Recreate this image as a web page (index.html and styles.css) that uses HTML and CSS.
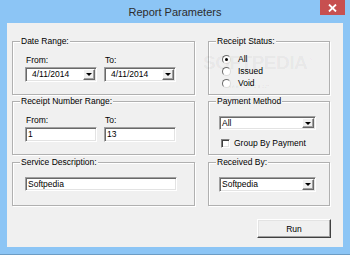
FILE: index.html
```html
<!DOCTYPE html>
<html>
<head>
<meta charset="utf-8">
<link rel="stylesheet" href="styles.css">
</head>
<body>
<div class="window">
  <div class="titlebar">
    <span class="title">Report Parameters</span>
    <div class="close"><svg width="9" height="8" viewBox="0 0 9 8"><path d="M1 0.5 L8 7.5 M8 0.5 L1 7.5" stroke="#fff" stroke-width="1.8"/></svg></div>
  </div>
  <div class="client">
    <div class="grid">
      <div class="group g-tall">
        <span class="gtitle">Date Range:</span>
        <div class="pair">
          <span class="lbl">From:</span>
          <span class="lbl">To:</span>
          <div class="combo date"><span class="ctext">4/11/2014</span><span class="cbtn"><i></i></span></div>
          <div class="combo date"><span class="ctext">4/11/2014</span><span class="cbtn"><i></i></span></div>
        </div>
      </div>
      <div class="group g-tall status">
        <span class="gtitle">Receipt Status:</span>
        <div class="radio-row"><span class="radio checked"></span><span>All</span></div>
        <div class="radio-row"><span class="radio"></span><span>Issued</span></div>
        <div class="radio-row"><span class="radio"></span><span>Void</span></div>
      </div>
      <div class="group g-tall">
        <span class="gtitle">Receipt Number Range:</span>
        <div class="pair">
          <span class="lbl">From:</span>
          <span class="lbl">To:</span>
          <div class="textbox">1</div>
          <div class="textbox">13</div>
        </div>
      </div>
      <div class="group g-tall right-pad">
        <span class="gtitle">Payment Method</span>
        <div class="combo wide"><span class="ctext">All</span><span class="cbtn"><i></i></span></div>
        <div class="check-row"><span class="check"></span><span>Group By Payment</span></div>
      </div>
      <div class="group g-short">
        <span class="gtitle">Service Description:</span>
        <div class="textbox long">Softpedia</div>
      </div>
      <div class="group g-short right-pad">
        <span class="gtitle">Received By:</span>
        <div class="combo wide tall"><span class="ctext">Softpedia</span><span class="cbtn"><i></i></span></div>
      </div>
    </div>
    <div class="actions"><button class="btn">Run</button></div>
    <div class="watermark">SOFTPEDIA<sup>™</sup></div>
    <div class="watermark-url">www.softpedia.com</div>
  </div>
</div>
</body>
</html>
```
FILE: styles.css
```css
* { box-sizing: border-box; }
html, body { margin: 0; padding: 0; }
body {
  width: 350px;
  height: 255px;
  overflow: hidden;
  background: #8cc5f5;
  font-family: "Liberation Sans", Arial, sans-serif;
  font-size: 8.5px;
  color: #000;
}
.window {
  width: 350px;
  height: 255px;
  border-bottom: 1px solid #6c9cc4;
}
.titlebar {
  position: relative;
  height: 23px;
  display: flex;
  align-items: center;
  justify-content: center;
}
.title {
  font-size: 11px;
  color: #2c2c2c;
  padding-top: 1px;
}
.close {
  position: absolute;
  top: 0;
  right: 5px;
  width: 25px;
  height: 15px;
  background: #c75050;
  display: flex;
  align-items: center;
  justify-content: center;
}
.client {
  position: relative;
  margin: 0 7px;
  height: 224px;
  background: #f0f0f0;
  padding: 18px 0 0 5px;
}
.grid {
  display: grid;
  grid-template-columns: 183px 122px;
  column-gap: 13px;
  row-gap: 6px;
}
.group {
  position: relative;
  border: 1px solid #b0b0b0;
  box-shadow: inset 1px 1px 0 #fff, 1px 1px 0 #fff;
  padding: 12px 0 0 12px;
}
.g-tall { height: 54px; }
.g-short { height: 44px; margin-top: 1px; padding-top: 14px; }
.gtitle {
  position: absolute;
  top: -6px;
  left: 7px;
  line-height: 11px;
  padding: 0 1px;
  background: #f0f0f0;
}
.pair {
  display: grid;
  grid-template-columns: 72px 72px;
  column-gap: 7px;
}
.lbl {
  line-height: 13px;
  padding-left: 1px;
}
.combo {
  display: flex;
  height: 15px;
  background: #fff;
  border: 1px solid;
  border-color: #a0a0a0 #fff #fff #a0a0a0;
  box-shadow: inset 1px 1px 0 #696969, inset -1px -1px 0 #e3e3e3;
  padding: 1px;
}
.ctext {
  flex: 1;
  line-height: 11px;
  padding-left: 1px;
}
.combo.date .ctext { padding-left: 5px; }
.cbtn {
  width: 12px;
  height: 11px;
  background: #f0f0f0;
  border: 1px solid;
  border-color: #fff #696969 #696969 #fff;
  box-shadow: inset -1px -1px 0 #a0a0a0;
  display: flex;
  align-items: center;
  justify-content: center;
}
.cbtn i {
  width: 0;
  height: 0;
  border-left: 3px solid transparent;
  border-right: 3px solid transparent;
  border-top: 3px solid #000;
}
.combo.wide { width: 97px; height: 14px; }
.combo.wide .cbtn { height: 10px; }
.combo.wide.tall { height: 15px; }
.combo.wide.tall .cbtn { height: 11px; }
.right-pad { padding: 14px 0 0 10px; }
.textbox {
  height: 15px;
  background: #fff;
  border: 1px solid;
  border-color: #a0a0a0 #fff #fff #a0a0a0;
  box-shadow: inset 1px 1px 0 #696969, inset -1px -1px 0 #e3e3e3;
  padding: 1px 2px;
  line-height: 11px;
}
.textbox.long { width: 152px; height: 14px; line-height: 10px; }
.status { padding: 11px 0 0 13px; }
.radio-row {
  display: flex;
  align-items: center;
  height: 12px;
  gap: 7px;
}
.radio {
  width: 9px;
  height: 9px;
  border-radius: 50%;
  background: #fff;
  border: 1px solid;
  border-color: #6d6d6d #dcdcdc #dcdcdc #6d6d6d;
  display: flex;
  align-items: center;
  justify-content: center;
}
.radio.checked::after {
  content: "";
  width: 3px;
  height: 3px;
  border-radius: 50%;
  background: #000;
}
.check-row {
  display: flex;
  align-items: center;
  height: 12px;
  margin-top: 7px;
  margin-left: 2px;
  gap: 4px;
}
.check {
  width: 9px;
  height: 9px;
  background: #fff;
  border: 1px solid;
  border-color: #808080 #fff #fff #808080;
  box-shadow: inset 1px 1px 0 #404040, inset -1px -1px 0 #e3e3e3;
}
.actions {
  display: flex;
  justify-content: flex-end;
  width: 319px;
  margin-top: 13px;
}
.btn {
  width: 74px;
  height: 19px;
  padding: 0;
  font-family: "Liberation Sans", Arial, sans-serif;
  font-size: 8.5px;
  color: #000;
  background: #f0f0f0;
  border: 1px solid;
  border-color: #fff #404040 #404040 #fff;
  box-shadow: inset -1px -1px 0 #a0a0a0, inset 1px 1px 0 #e3e3e3;
}
.watermark {
  position: absolute;
  left: 196px;
  top: 29px;
  font-size: 19px;
  font-weight: bold;
  letter-spacing: -0.5px;
  color: rgba(0, 0, 0, 0.05);
  pointer-events: none;
}
.watermark sup { font-size: 6px; font-weight: normal; }
.watermark-url {
  position: absolute;
  left: 221px;
  top: 60px;
  font-size: 5px;
  color: rgba(0, 0, 0, 0.07);
  pointer-events: none;
}
```
